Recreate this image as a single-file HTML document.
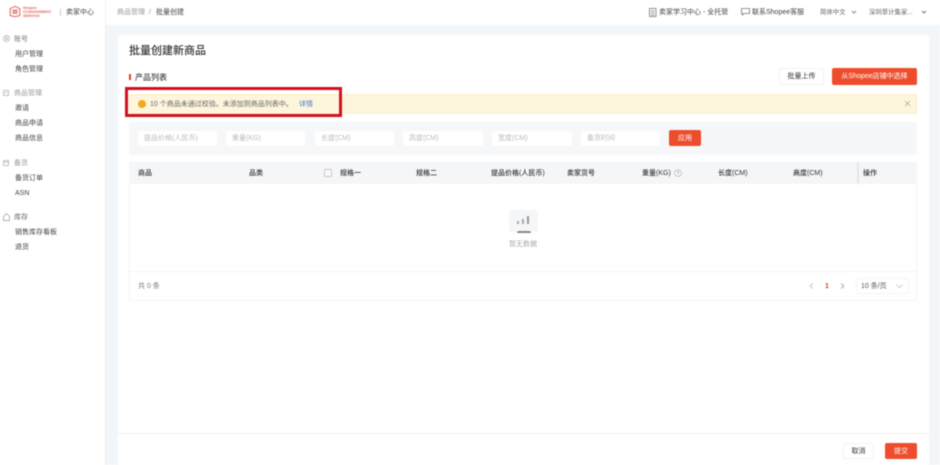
<!DOCTYPE html>
<html lang="zh-CN">
<head>
<meta charset="utf-8">
<title>批量创建</title>
<style>
*{box-sizing:border-box}
html,body{margin:0;padding:0}
body{width:940px;height:465px;overflow:hidden;background:#fff}
#p{position:relative;width:940px;height:465px;overflow:hidden;background:#f3f6f8;font-family:"Liberation Sans","Noto Sans CJK SC",sans-serif;color:#333;filter:blur(.45px)}
#p div,#p span.a,#p svg{position:absolute}
.t{white-space:nowrap;line-height:12px;margin-top:1px}
.nav{font-size:7px;color:#444}
.grp{font-size:7px;color:#999}
.th{font-size:7px;color:#333;font-weight:500;top:167px}
.in{background:#fff;border-radius:2px;top:131px;height:15px;font-size:7px;color:#bbb;padding-left:6px;line-height:16px;white-space:nowrap}
.btn{background:#ee4d2d;color:#fff;border-radius:2px;font-size:7px;text-align:center}
.wb{background:#fff;border:1px solid #f3f3f3;border-radius:2px;font-size:7px;color:#333;text-align:center}
</style>
</head>
<body>
<div id="p">
  <div style="left:0;top:0;width:940px;height:25px;background:#fff"></div>
  <div style="left:0;top:0;width:106px;height:465px;background:#fff;border-right:1px solid #eef0f2"></div>

  <svg style="left:9px;top:5px" width="12" height="13" viewBox="0 0 15 15" fill="none" stroke="#dd6a5e" stroke-width="1.300"><path d="M7.500 1L13.500 4V12.500L7.500 14L1.500 12.500V4Z"/><rect x="5" y="5.500" width="5" height="4.500" fill="#eca298" stroke-width=".8"/></svg>
  <div class="t" style="left:23px;top:5px;font-size:3.800px;color:#dd6a5e;line-height:4px;font-weight:700">Shopee<br>CONSIGNMENT<br>SERVICE</div>
  <div style="left:60px;top:9px;width:1px;height:7px;background:#ccc"></div>
  <div class="t" style="left:66px;top:6px;font-size:7px;color:#444">卖家中心</div>

  <div class="t" style="left:117px;top:6px;font-size:7px;color:#999">商品管理</div>
  <div class="t" style="left:149px;top:6px;font-size:7px;color:#999">/</div>
  <div class="t" style="left:156px;top:6px;font-size:7px;color:#444">批量创建</div>

  <svg style="left:649px;top:8px" width="8" height="9" viewBox="0 0 8 9" fill="none" stroke="#777" stroke-width=".8"><rect x=".5" y=".5" width="6.500" height="8"/><path d="M2 3H5.500M2 5H5.500M2 7H5.500"/></svg>
  <div class="t" style="left:659px;top:6px;font-size:7px;color:#444">卖家学习中心 - 全托管</div>
  <svg style="left:741px;top:8px" width="9" height="8" viewBox="0 0 9 8" fill="none" stroke="#777" stroke-width=".8"><path d="M.5 .5H8.500V5.500H3L1.500 7V5.500H.5Z"/></svg>
  <div class="t" style="left:752px;top:6px;font-size:7px;color:#444">联系Shopee客服</div>
  <div class="t" style="left:820px;top:6px;font-size:6.400px;color:#666">简体中文</div>
  <svg style="left:851px;top:10px" width="6" height="4" viewBox="0 0 6 4" fill="none" stroke="#666" stroke-width=".8"><path d="M1 1L3 3L5 1"/></svg>
  <div class="t" style="left:869px;top:6px;font-size:6.400px;color:#666">深圳草计集家...</div>
  <svg style="left:921px;top:10px" width="6" height="4" viewBox="0 0 6 4" fill="none" stroke="#555" stroke-width=".8"><path d="M1 1L3 3L5 1"/></svg>

  <svg style="left:3px;top:35px" width="7" height="7" viewBox="0 0 7 7" fill="none" stroke="#aaa" stroke-width=".7"><circle cx="3.500" cy="3.500" r="3"/><path d="M2 2L5 5M5 2L2 5"/></svg>
  <div class="t grp" style="left:14px;top:33px;color:#777">账号</div>
  <div class="t nav" style="left:15px;top:48px">用户管理</div>
  <div class="t nav" style="left:15px;top:63px">角色管理</div>
  <svg style="left:3px;top:90px" width="6" height="6" viewBox="0 0 6 6" fill="none" stroke="#aaa" stroke-width=".7"><rect x=".5" y=".5" width="5" height="5"/><path d="M1.500 2.500H4.500"/></svg>
  <div class="t grp" style="left:14px;top:87px">商品管理</div>
  <div class="t nav" style="left:15px;top:102px">邀请</div>
  <div class="t nav" style="left:15px;top:117px">商品申请</div>
  <div class="t nav" style="left:15px;top:132px">商品信息</div>
  <svg style="left:3px;top:160px" width="6" height="6" viewBox="0 0 6 6" fill="none" stroke="#aaa" stroke-width=".7"><rect x=".5" y=".5" width="5" height="5"/><path d="M.5 2H5.500"/></svg>
  <div class="t grp" style="left:14px;top:157px">备货</div>
  <div class="t nav" style="left:15px;top:172px">备货订单</div>
  <div class="t nav" style="left:15px;top:187px">ASN</div>
  <svg style="left:3px;top:213px" width="7" height="8" viewBox="0 0 7 8" fill="none" stroke="#999" stroke-width=".7"><path d="M.5 3.500L3.500 .5L6.500 3.500V7.500H.5Z"/></svg>
  <div class="t grp" style="left:14px;top:211px;color:#666">库存</div>
  <div class="t nav" style="left:15px;top:226px">销售库存看板</div>
  <div class="t nav" style="left:15px;top:241px">退货</div>

  <div style="left:118px;top:35px;width:811px;height:430px;background:#fff;border-radius:2px"></div>
  <div class="t" style="left:129px;top:44px;font-size:11px;color:#333;font-weight:500">批量创建新商品</div>
  <div style="left:129px;top:74px;width:2px;height:6px;background:#d9431f"></div>
  <div class="t" style="left:135px;top:71px;font-size:8px;color:#444;font-weight:500">产品列表</div>
  <div class="wb" style="left:779px;top:68px;width:45px;height:17px;line-height:16px">批量上传</div>
  <div class="btn" style="left:832px;top:68px;width:85px;height:17px;line-height:18px">从Shopee店铺中选择</div>

  <div style="left:129px;top:94px;width:788px;height:20px;background:#fdf6dd;border:1px solid #fbeec8;border-radius:2px"></div>
  <div style="left:138px;top:100px;width:8px;height:8px;border-radius:50%;background:#f3a71c"></div>
  <div class="t" style="left:150px;top:98px;font-size:7px;color:#666">10 个商品未通过校验。未添加到商品列表中。</div>
  <div class="t" style="left:299px;top:98px;font-size:7px;color:#4a76c9">详情</div>
  <svg style="left:904px;top:100px" width="7" height="7" viewBox="0 0 7 7" fill="none" stroke="#aaa" stroke-width=".8"><path d="M1 1L6 6M6 1L1 6"/></svg>
  <div style="left:125px;top:87px;width:217px;height:30px;border:3px solid #d2101e"></div>

  <div style="left:129px;top:122px;width:788px;height:33px;background:#f6f7f8;border-radius:2px"></div>
  <div class="in" style="left:138px;width:79px">提品价格(人民币)</div>
  <div class="in" style="left:226px;width:79px">重量(KG)</div>
  <div class="in" style="left:315px;width:79px">长度(CM)</div>
  <div class="in" style="left:403px;width:80px">高度(CM)</div>
  <div class="in" style="left:492px;width:80px">宽度(CM)</div>
  <div class="in" style="left:581px;width:79px">备货时间</div>
  <div class="btn" style="left:669px;top:130px;width:32px;height:16px;line-height:17px">应用</div>

  <div style="left:129px;top:162px;width:788px;height:139px;border:1px solid #f3f4f5;background:#fff"></div>
  <div style="left:129px;top:162px;width:788px;height:22px;background:#f5f6f8"></div>
  <div style="left:857px;top:162px;width:2px;height:22px;background:#e4e6e9"></div>
  <div class="t th" style="left:138px">商品</div>
  <div class="t th" style="left:249px">品类</div>
  <div style="left:324px;top:169px;width:8px;height:8px;border:1px solid #c8c8c8;background:#f8f8f8;border-radius:1px"></div>
  <div class="t th" style="left:340px">规格一</div>
  <div class="t th" style="left:416px">规格二</div>
  <div class="t th" style="left:491px">提品价格(人民币)</div>
  <div class="t th" style="left:567px">卖家货号</div>
  <div class="t th" style="left:642px">重量(KG)</div>
  <svg style="left:674px;top:169px" width="8" height="8" viewBox="0 0 8 8" fill="none" stroke="#aaa" stroke-width=".6"><circle cx="4" cy="4" r="3.500"/><path d="M3 3.200C3 2 5 2 5 3.200C5 4 4 4 4 5M4 5.800V6.300"/></svg>
  <div class="t th" style="left:718px">长度(CM)</div>
  <div class="t th" style="left:793px">高度(CM)</div>
  <div class="t th" style="left:863px">操作</div>

  <div style="left:509px;top:210px;width:29px;height:22px;background:#f4f6f8;border-radius:3px"></div>
  <div style="left:517px;top:221px;width:1.500px;height:3px;background:#aaa"></div>
  <div style="left:522px;top:219px;width:1.500px;height:5px;background:#aaa"></div>
  <div style="left:527px;top:216px;width:1.500px;height:8px;background:#999"></div>
  <div style="left:517px;top:231px;width:14px;height:1.500px;background:#888;border-radius:2px 2px 0 0"></div>
  <div class="t" style="left:509px;top:238px;font-size:7px;color:#aaa">暂无数据</div>

  <div style="left:130px;top:271px;width:786px;height:1px;background:#f3f4f5"></div>
  <div class="t" style="left:138px;top:280px;font-size:7px;color:#777">共 0 条</div>
  <svg style="left:809px;top:283px" width="5" height="6" viewBox="0 0 5 7" fill="none" stroke="#aaa" stroke-width=".8"><path d="M4 .5L1 3.500L4 6.500"/></svg>
  <div class="t" style="left:825px;top:280px;font-size:7px;color:#d9432a;font-weight:700">1</div>
  <svg style="left:840px;top:283px" width="5" height="6" viewBox="0 0 5 7" fill="none" stroke="#888" stroke-width=".8"><path d="M1 .5L4 3.500L1 6.500"/></svg>
  <div style="left:856px;top:278px;width:53px;height:16px;border:1px solid #f3f4f5;border-radius:2px"></div>
  <div class="t" style="left:861px;top:280px;font-size:7px;color:#555">10 条/页</div>
  <svg style="left:896px;top:284px" width="7" height="5" viewBox="0 0 7 5" fill="none" stroke="#bbb" stroke-width=".7"><path d="M.5 .5L3.500 3.500L6.500 .5"/></svg>

  <div style="left:118px;top:433px;width:811px;height:1px;background:#f0f0f0"></div>
  <div class="wb" style="left:843px;top:443px;width:31px;height:16px;line-height:15px">取消</div>
  <div class="btn" style="left:885px;top:443px;width:32px;height:16px;line-height:17px">提交</div>
</div>
</body>
</html>
